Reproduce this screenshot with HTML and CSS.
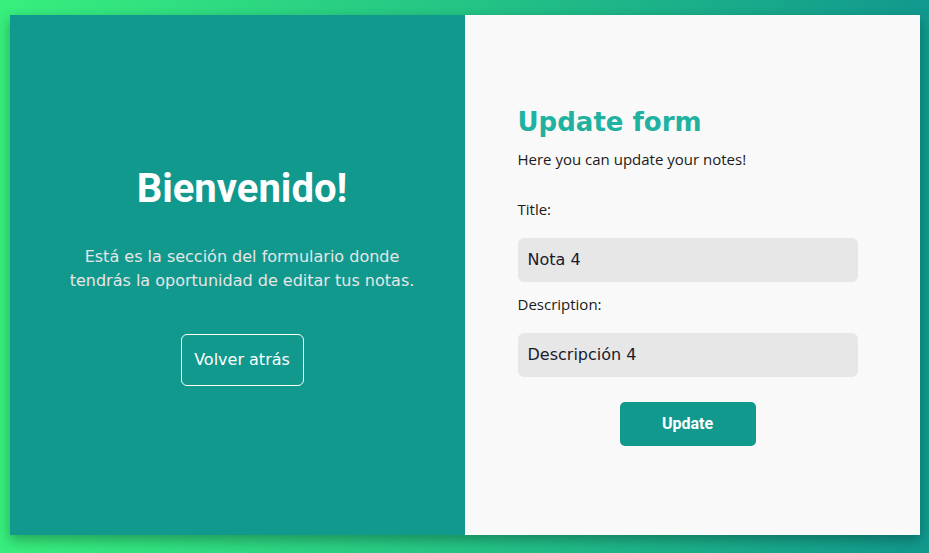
FILE: index.html
```html
<!DOCTYPE html>
<html lang="es">
<head>
<meta charset="utf-8">
<title>Update form</title>
<link rel="stylesheet" href="styles.css">
</head>
<body>
<main class="card">
  <section class="welcome">
    <h1 class="welcome-title">Bienvenido!</h1>
    <p class="welcome-text">Está es la sección del formulario donde tendrás la oportunidad de editar tus notas.</p>
    <button class="back-btn" type="button">Volver atrás</button>
  </section>
  <section class="form-side">
    <form class="form">
      <h2 class="form-title">Update form</h2>
      <p class="form-sub">Here you can update your notes!</p>
      <label class="label" for="title">Title:</label>
      <input class="input" id="title" type="text" value="Nota 4">
      <label class="label" for="desc">Description:</label>
      <input class="input" id="desc" type="text" value="Descripción 4">
      <button class="update-btn" type="button">Update</button>
    </form>
  </section>
</main>
</body>
</html>
```

FILE: styles.css
```css
* { box-sizing: border-box; }
html, body { height: 100%; }
body {
  margin: 0;
  background: linear-gradient(to right, #38ef7d, #11998e);
  display: flex;
  justify-content: center;
  padding-top: 15px;
  font-family: "DejaVu Sans", sans-serif;
}
.card {
  width: 910px;
  height: 520px;
  display: flex;
  box-shadow: 0 5px 12px rgba(0, 0, 0, 0.3);
}
.welcome {
  flex: 0 0 455px;
  background: #11998e;
  display: flex;
  flex-direction: column;
  align-items: center;
  justify-content: center;
  text-align: center;
  padding: 0 10px 0 20px;
}
.welcome-title {
  margin: 0;
  font-family: Roboto, sans-serif;
  font-weight: 700;
  font-size: 40px;
  color: #fff;
  line-height: 48px;
}
.welcome-text {
  margin: 32px 0 0;
  max-width: 365px;
  color: #e6e6e6;
  font-size: 16px;
  line-height: 24px;
}
.back-btn {
  margin-top: 41px;
  width: 123px;
  height: 52px;
  background: transparent;
  border: 1px solid #fff;
  border-radius: 6px;
  color: #fff;
  font-family: "DejaVu Sans", sans-serif;
  font-size: 16px;
  cursor: pointer;
}
.form-side {
  flex: 0 0 455px;
  background: #f9f9f9;
  display: flex;
  align-items: center;
  padding-left: 53px;
}
.form {
  width: 340px;
  display: flex;
  flex-direction: column;
  align-items: flex-start;
  margin-top: -1px;
}
.form-title {
  margin: 0;
  font-family: "DejaVu Sans", sans-serif;
  font-weight: 700;
  font-size: 26px;
  color: #1fb2a0;
  line-height: 36px;
}
.form-sub {
  margin: 8px 0 0;
  font-family: "Open Sans", sans-serif;
  font-size: 15px;
  color: #1a1a1a;
  line-height: 22px;
}
.label {
  font-family: "Open Sans", sans-serif;
  font-size: 15px;
  color: #1a1a1a;
  line-height: 22px;
  margin-top: 28px;
}
.label + .input { margin-top: 18px; }
.input + .label { margin-top: 11px; }
.input {
  width: 100%;
  height: 44px;
  border: none;
  border-radius: 6px;
  background: #e7e7e7;
  padding: 0 10px;
  font-family: "DejaVu Sans", sans-serif;
  font-size: 16px;
  color: #1a1a2e;
  outline: none;
}
.update-btn {
  align-self: center;
  margin-top: 25px;
  width: 136px;
  height: 44px;
  border: none;
  border-radius: 5px;
  background: #11998e;
  color: #fff;
  font-family: Roboto, sans-serif;
  font-weight: 700;
  font-size: 16px;
  cursor: pointer;
}
```
